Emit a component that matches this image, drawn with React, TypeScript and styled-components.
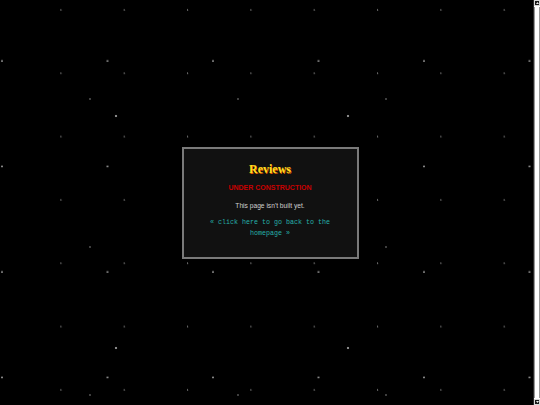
import React from "react";
import styled, { createGlobalStyle } from "styled-components";

const GlobalStyle = createGlobalStyle`
    html, body {
        margin: 0;
        overflow: hidden;
        background: #000;
    }
`;

// four star layers, each repeating at its own spacing
const Sky = styled.main`
    height: 100vh;
    display: flex;
    align-items: center;
    justify-content: center;
    background-color: #000;
    background-image:
        radial-gradient(circle at 116px 116px, #888 0 1px, transparent 1.6px),
        radial-gradient(circle at 90px 99px, #555 0 0.6px, transparent 1px),
        radial-gradient(circle at 2px 61px, #999 0 0.7px, transparent 1.1px),
        radial-gradient(circle at 61px 10px, #666 0 0.6px, transparent 1px);
    background-size:
        232px 232px,
        148px 148px,
        105.5px 105.5px,
        63.33px 63.33px;
    background-repeat: repeat;
`;

// thin classic scrollbar drawn over the right edge
const ScrollRail = styled.div`
    position: fixed;
    top: 0;
    right: 0;
    bottom: 0;
    width: 6px;
    display: flex;
    flex-direction: column;
    background: #fff;
    border-left: 1px solid #2a2a2a;
`;

const ScrollButton = styled.div`
    height: 6px;
    box-sizing: border-box;
    display: flex;
    align-items: center;
    justify-content: center;
    background: #1a1a1a;
    border: 1px solid #d8d8d8;
`;

const ScrollThumb = styled.div`
    flex: 1;
    margin: 1px 0;
    background: #fff;
    border: 1px solid #9a9a9a;
    border-top: 0;
    border-bottom: 0;
`;

const Card = styled.section`
    width: 177px;
    box-sizing: border-box;
    padding: 13px 15px 18px;
    background: #111;
    border: 2px solid #7a7a7a;
    text-align: center;
`;

const Title = styled.h1`
    margin: 0;
    font-family: "Liberation Serif", "Times New Roman", serif;
    font-size: 12px;
    line-height: 14px;
    font-weight: bold;
    color: #ffdd1f;
    text-shadow: 0.6px 0.8px 0.6px #e65a00;
`;

const Tag = styled.p`
    margin: 8px 0 0;
    font-family: "Liberation Sans", Arial, sans-serif;
    font-size: 7px;
    line-height: 8px;
    font-weight: bold;
    color: #c80000;
`;

const Note = styled.p`
    margin: 10px 0 0;
    font-family: "Liberation Sans", Arial, sans-serif;
    font-size: 6.67px;
    line-height: 8px;
    color: #cfcfcf;
`;

const BackLink = styled.a`
    display: block;
    margin-top: 7px;
    font-family: "Liberation Mono", "Courier New", monospace;
    font-size: 6.67px;
    line-height: 11px;
    color: #26b0a8;
    text-decoration: none;
`;

function Arrow({ up }: { up: boolean }) {
    return (
        <svg width="3" height="2" viewBox="0 0 3 2">
            <path d={up ? "M1.5 0 L3 2 L0 2 Z" : "M0 0 L3 0 L1.5 2 Z"} fill="#eee" />
        </svg>
    );
}

function App() {
    return (
        <>
            <GlobalStyle />
            <Sky>
                <Card>
                    <Title>Reviews</Title>
                    <Tag>UNDER CONSTRUCTION</Tag>
                    <Note>This page isn't built yet.</Note>
                    <BackLink href="#">« click here to go back to the homepage »</BackLink>
                </Card>
            </Sky>
            <ScrollRail>
                <ScrollButton><Arrow up /></ScrollButton>
                <ScrollThumb />
                <ScrollButton><Arrow up={false} /></ScrollButton>
            </ScrollRail>
        </>
    );
}

export default App;
